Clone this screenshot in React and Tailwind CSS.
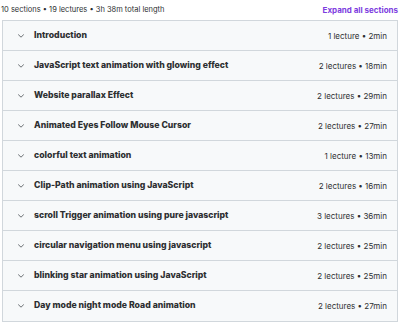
import React from 'react';

const sections = [
  { title: 'Introduction', meta: '1 lecture • 2min' },
  { title: 'JavaScript text animation with glowing effect', meta: '2 lectures • 18min' },
  { title: 'Website parallax Effect', meta: '2 lectures • 29min' },
  { title: 'Animated Eyes Follow Mouse Cursor', meta: '2 lectures • 27min' },
  { title: 'colorful text animation', meta: '1 lecture • 13min' },
  { title: 'Clip-Path animation using JavaScript', meta: '2 lectures • 16min' },
  { title: 'scroll Trigger animation using pure javascript', meta: '3 lectures • 36min' },
  { title: 'circular navigation menu using javascript', meta: '2 lectures • 25min' },
  { title: 'blinking star animation using JavaScript', meta: '2 lectures • 25min' },
  { title: 'Day mode night mode Road animation', meta: '2 lectures • 27min' },
];

const Chevron = () => (
  <svg width="8" height="8" viewBox="0 0 8 8" className="text-[#6a6f73]">
    <path d="M1.5 2.8 L4 5.2 L6.5 2.8" fill="none" stroke="currentColor" strokeWidth="1" strokeLinecap="round" />
  </svg>
);

const App = () => {
  return (
    <div className="w-[400px] h-[322px] bg-white overflow-hidden font-['Inter',sans-serif] text-[#2d2f31]">
      <div className="h-5 flex items-center justify-between pl-[1px] pr-[2px]">
        <span className="text-[7.5px] text-[#2d2f31]">10 sections • 19 lectures • 3h 38m total length</span>
        <span className="text-[8px] font-bold text-[#7d3ce0]">Expand all sections</span>
      </div>
      <div className="mx-[2px] border border-[#d1d7dc]">
        {sections.map((s, i) => (
          <div
            key={i}
            className={`h-[30px] flex items-center bg-[#f7f9fa] pl-[14px] pr-[10px] ${i < sections.length - 1 ? 'border-b border-[#d1d7dc]' : 'h-[29px]'}`}
          >
            <Chevron />
            <span className="ml-[9px] text-[8.7px] font-extrabold flex-1">{s.title}</span>
            <span className="text-[8px] text-[#2d2f31]">{s.meta}</span>
          </div>
        ))}
      </div>
    </div>
  );
};

export default App;
